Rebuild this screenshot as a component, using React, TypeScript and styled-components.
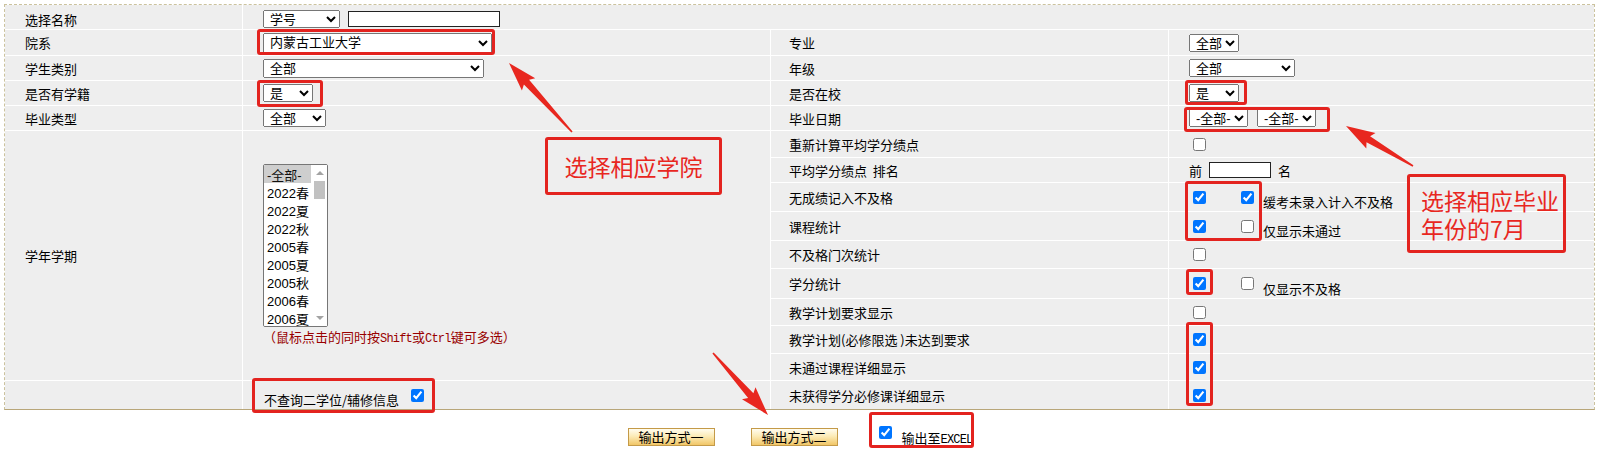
import React from "react";
import styled, { createGlobalStyle } from "styled-components";

const GlobalStyle = createGlobalStyle`
  html, body {
    margin: 0;
    padding: 0;
    background: #fff;
  }
  body {
    font-family: "Noto Sans CJK SC", "Liberation Sans", sans-serif;
    font-size: 13px;
    color: #000;
  }
`;

const Page = styled.div`
  position: relative;
  width: 1602px;
  height: 450px;
  overflow: hidden;
  padding-top: 4px;
  box-sizing: border-box;
`;

const Frame = styled.div`
  margin: 0 7px 0 4px;
  border: 1px dashed #cbc29e;
  border-bottom: 1px solid #b8a679;
`;

const FormGrid = styled.div`
  display: grid;
  grid-template-columns: 237px 527px 397px 1fr;
  grid-template-rows: 24px 25px 24px 24px 24px 26px 24px 28px 28px 27px 29px 26px 27px 26px 28px;
  gap: 1px;
  background: #fff;
`;

const Cell = styled.div<{ $span?: number; $rows?: number; $pad?: number }>`
  grid-column: span ${(p) => p.$span ?? 1};
  grid-row: span ${(p) => p.$rows ?? 1};
  background: #eeeeee;
  display: flex;
  align-items: center;
  padding-left: ${(p) => p.$pad ?? 20}px;
  white-space: nowrap;
  min-width: 0;
`;

const NameCell = styled(Cell)`
  padding-top: 4px;
`;

const TermCell = styled(Cell)`
  flex-direction: column;
  align-items: flex-start;
  justify-content: center;
`;

const Select = styled.select<{ $w: number; $h?: number }>`
  width: ${(p) => p.$w}px;
  height: ${(p) => p.$h ?? 18}px;
  font-family: "Liberation Sans", "Noto Sans CJK SC", sans-serif;
  font-size: 13px;
  line-height: 15px;
  color: #000;
  margin: 0;
  padding: 0 0 0 2px;
  box-sizing: border-box;
`;

const TextBox = styled.input<{ $w: number }>`
  width: ${(p) => p.$w}px;
  height: 16px;
  border: 1px solid #222;
  padding: 0;
  margin: 0 0 0 ${(p) => (p.$w > 100 ? 8 : 7)}px;
  box-sizing: border-box;
  background: #fff;
`;

const ListWrap = styled.div`
  position: relative;
  width: 65px;
  height: 163px;
`;

const TermList = styled.select`
  width: 65px;
  height: 163px;
  margin: 0;
  padding: 0 16px 0 0;
  font-family: "Liberation Sans", "Noto Sans CJK SC", sans-serif;
  font-size: 13px;
  color: #000;
  box-sizing: border-box;

  option {
    padding: 0 2px 0 3px;
    line-height: 18px;
    height: 18px;
  }
`;

const ScrollTrack = styled.div`
  position: absolute;
  top: 1px;
  right: 1px;
  bottom: 1px;
  width: 15px;
  background: #fff;
  display: flex;
  flex-direction: column;
  align-items: center;
  pointer-events: none;
`;

const ScrollArrow = styled.div<{ $down?: boolean }>`
  height: 16px;
  width: 100%;
  display: flex;
  align-items: center;
  justify-content: center;

  &::before {
    content: "";
    border-left: 4px solid transparent;
    border-right: 4px solid transparent;
    ${(p) => (p.$down ? "border-top: 4px solid #a3a3a3;" : "border-bottom: 4px solid #a3a3a3;")}
  }
`;

const ScrollThumb = styled.div`
  width: 11px;
  height: 18px;
  background: #c1c1c1;
`;

const ScrollSpace = styled.div`
  flex: 1;
`;

const Hint = styled.div`
  margin-top: 2px;
  font-size: 13px;
  line-height: 16px;
  color: #990000;
`;

const Mono = styled.span<{ $size?: number }>`
  font-family: "Liberation Mono", monospace;
  font-size: ${(p) => p.$size ?? 12}px;
  letter-spacing: -0.8px;
`;

const Check = styled.input.attrs({ type: "checkbox" })`
  width: 13px;
  height: 13px;
  margin: 0 3px 0 4px;
  flex: none;
`;

const CheckSlot = styled.span`
  display: inline-flex;
  align-items: center;
  width: 48px;
`;

const LowText = styled.span<{ $gap?: number }>`
  align-self: flex-end;
  line-height: 16px;
  margin-left: ${(p) => p.$gap ?? 6}px;
  margin-bottom: 1px;
`;

const Gap = styled.span<{ $w: number }>`
  display: inline-block;
  width: ${(p) => p.$w}px;
`;

const ActionBar = styled.div`
  display: flex;
  justify-content: center;
  align-items: flex-start;
  padding-top: 18px;
`;

const ExportButton = styled.button<{ $ml?: number }>`
  width: 87px;
  height: 18px;
  margin-left: ${(p) => p.$ml ?? 0}px;
  padding: 0;
  border: 1px solid #c49a48;
  background: linear-gradient(to bottom, #fffcef 0%, #fcebb7 45%, #f1c667 100%);
  font-family: "Noto Sans CJK SC", sans-serif;
  font-size: 13px;
  line-height: 16px;
  color: #000;
`;

const ExcelOption = styled.label`
  display: flex;
  align-items: flex-start;
  margin-left: 41px;
  width: 96px;

  input {
    margin: -2px 10px 0 0;
  }
`;

const ExcelText = styled.span`
  margin-top: 2px;
  line-height: 16px;
`;

const Mark = styled.div<{ $x: number; $y: number; $w: number; $h: number }>`
  position: absolute;
  left: ${(p) => p.$x}px;
  top: ${(p) => p.$y}px;
  width: ${(p) => p.$w}px;
  height: ${(p) => p.$h}px;
  border: 3px solid #e3231f;
  border-radius: 3px;
  box-sizing: border-box;
  pointer-events: none;
`;

const Callout = styled(Mark)<{ $center?: boolean }>`
  display: flex;
  flex-direction: column;
  justify-content: center;
  align-items: ${(p) => (p.$center ? "center" : "flex-start")};
  padding-left: ${(p) => (p.$center ? 0 : 11)}px;
  font-size: 23px;
  line-height: 28px;
  color: #e8271f;
`;

const ArrowLayer = styled.svg`
  position: absolute;
  left: 0;
  top: 0;
  pointer-events: none;
`;

const marks = [
  { x: 257, y: 29, w: 238, h: 26 },
  { x: 257, y: 80, w: 66, h: 27 },
  { x: 1185, y: 80, w: 62, h: 25 },
  { x: 1184, y: 107, w: 146, h: 25 },
  { x: 1185, y: 181, w: 77, h: 60 },
  { x: 1186, y: 269, w: 27, h: 26 },
  { x: 1186, y: 322, w: 27, h: 84 },
  { x: 252, y: 378, w: 183, h: 35 },
  { x: 869, y: 412, w: 105, h: 36 },
];

const arrows = [
  { tx: 572, ty: 132, px: 509, py: 63 },
  { tx: 1413, ty: 166, px: 1346, py: 126 },
  { tx: 713, ty: 353, px: 768, py: 415 },
];

const arrowPoints = (tx: number, ty: number, px: number, py: number) => {
  const dx = px - tx;
  const dy = py - ty;
  const len = Math.hypot(dx, dy);
  const ux = dx / len;
  const uy = dy / len;
  const nx = -uy;
  const ny = ux;
  const head = 26;
  const wing = 9;
  const neck = 3.5;
  const tail = 0.8;
  const bx = px - ux * head;
  const by = py - uy * head;
  const pts = [
    [tx + nx * tail, ty + ny * tail],
    [bx + nx * neck, by + ny * neck],
    [bx + nx * wing - ux * 3, by + ny * wing - uy * 3],
    [px, py],
    [bx - nx * wing - ux * 3, by - ny * wing - uy * 3],
    [bx - nx * neck, by - ny * neck],
    [tx - nx * tail, ty - ny * tail],
  ];
  return pts.map((p) => p.map((v) => v.toFixed(1)).join(",")).join(" ");
};

const terms = ["-全部-", "2022春", "2022夏", "2022秋", "2005春", "2005夏", "2005秋", "2006春", "2006夏", "2006秋", "2007春", "2007夏", "2007秋", "2008春"];

const App = () => {
  return (
    <Page>
      <GlobalStyle />
      <Frame>
        <FormGrid>
          <NameCell>选择名称</NameCell>
          <NameCell $span={3}>
            <Select $w={77}>
              <option>学号</option>
              <option>姓名</option>
            </Select>
            <TextBox $w={152} />
          </NameCell>

          <Cell>院系</Cell>
          <Cell>
            <Select $w={229} $h={20}>
              <option>内蒙古工业大学</option>
            </Select>
          </Cell>
          <Cell $pad={18}>专业</Cell>
          <Cell>
            <Select $w={50}>
              <option>全部</option>
            </Select>
          </Cell>

          <Cell>学生类别</Cell>
          <Cell>
            <Select $w={221} $h={19}>
              <option>全部</option>
            </Select>
          </Cell>
          <Cell $pad={18}>年级</Cell>
          <Cell>
            <Select $w={106}>
              <option>全部</option>
            </Select>
          </Cell>

          <Cell>是否有学籍</Cell>
          <Cell>
            <Select $w={50}>
              <option>是</option>
              <option>否</option>
            </Select>
          </Cell>
          <Cell $pad={18}>是否在校</Cell>
          <Cell>
            <Select $w={50}>
              <option>是</option>
              <option>否</option>
            </Select>
          </Cell>

          <Cell>毕业类型</Cell>
          <Cell>
            <Select $w={63}>
              <option>全部</option>
            </Select>
          </Cell>
          <Cell $pad={18}>毕业日期</Cell>
          <Cell>
            <Select $w={59}>
              <option>-全部-</option>
            </Select>
            <Gap $w={9} />
            <Select $w={59}>
              <option>-全部-</option>
            </Select>
          </Cell>

          <Cell $rows={9}>学年学期</Cell>
          <TermCell $rows={9}>
            <ListWrap>
              <TermList multiple size={9} defaultValue={["-全部-"]}>
                {terms.map((t) => (
                  <option key={t} value={t}>
                    {t}
                  </option>
                ))}
              </TermList>
              <ScrollTrack>
                <ScrollArrow />
                <ScrollThumb />
                <ScrollSpace />
                <ScrollArrow $down />
              </ScrollTrack>
            </ListWrap>
            <Hint>
              （鼠标点击的同时按<Mono>Shift</Mono>或<Mono>Ctrl</Mono>键可多选）
            </Hint>
          </TermCell>
          <Cell $pad={18}>重新计算平均学分绩点</Cell>
          <Cell>
            <Check />
          </Cell>

          <Cell $pad={18}>平均学分绩点&nbsp;&nbsp;排名</Cell>
          <Cell>
            前<TextBox $w={62} />
            <Gap $w={7} />名
          </Cell>

          <Cell $pad={18}>无成绩记入不及格</Cell>
          <Cell>
            <CheckSlot>
              <Check defaultChecked />
            </CheckSlot>
            <Check defaultChecked />
            <LowText>缓考未录入计入不及格</LowText>
          </Cell>

          <Cell $pad={18}>课程统计</Cell>
          <Cell>
            <CheckSlot>
              <Check defaultChecked />
            </CheckSlot>
            <Check />
            <LowText>仅显示未通过</LowText>
          </Cell>

          <Cell $pad={18}>不及格门次统计</Cell>
          <Cell>
            <Check />
          </Cell>

          <Cell $pad={18}>学分统计</Cell>
          <Cell>
            <CheckSlot>
              <Check defaultChecked />
            </CheckSlot>
            <Check />
            <LowText>仅显示不及格</LowText>
          </Cell>

          <Cell $pad={18}>教学计划要求显示</Cell>
          <Cell>
            <Check />
          </Cell>

          <Cell $pad={18}>教学计划(必修限选&nbsp;)未达到要求</Cell>
          <Cell>
            <Check defaultChecked />
          </Cell>

          <Cell $pad={18}>未通过课程详细显示</Cell>
          <Cell>
            <Check defaultChecked />
          </Cell>

          <Cell />
          <Cell $pad={21}>
            <LowText $gap={0}>不查询二学位/辅修信息</LowText>
            <Gap $w={8} />
            <Check defaultChecked />
          </Cell>
          <Cell $pad={18}>未获得学分必修课详细显示</Cell>
          <Cell>
            <Check defaultChecked />
          </Cell>
        </FormGrid>
      </Frame>

      <ActionBar>
        <ExportButton>输出方式一</ExportButton>
        <ExportButton $ml={36}>输出方式二</ExportButton>
        <ExcelOption>
          <Check defaultChecked />
          <ExcelText>
            输出至<Mono>EXCEL</Mono>
          </ExcelText>
        </ExcelOption>
      </ActionBar>

      {marks.map((m, i) => (
        <Mark key={i} $x={m.x} $y={m.y} $w={m.w} $h={m.h} />
      ))}
      <Callout $x={545} $y={137} $w={177} $h={58} $center>
        选择相应学院
      </Callout>
      <Callout $x={1407} $y={174} $w={159} $h={79}>
        <span>选择相应毕业</span>
        <span>年份的7月</span>
      </Callout>

      <ArrowLayer width="1602" height="450" viewBox="0 0 1602 450">
        {arrows.map((a, i) => (
          <polygon key={i} points={arrowPoints(a.tx, a.ty, a.px, a.py)} fill="#e8271f" />
        ))}
      </ArrowLayer>
    </Page>
  );
};

export default App;
